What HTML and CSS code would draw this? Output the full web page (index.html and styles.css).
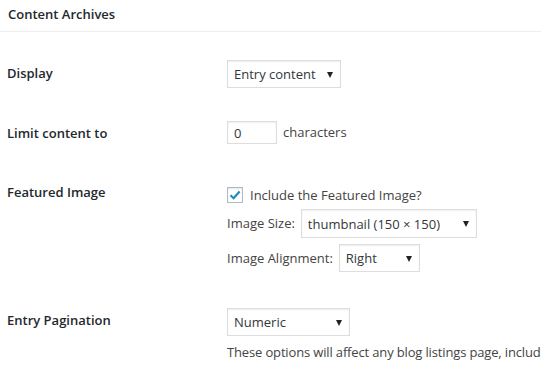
FILE: index.html
```html
<!DOCTYPE html>
<html lang="en">
<head>
  <title>Content Archives</title>
  <meta charset="utf-8">
  <meta name="viewport" content="width=device-width, initial-scale=1">
  <link rel="stylesheet" href="styles.css">
</head>
<body>
  <div class="box">
    <h3 class="box-title">Content Archives</h3>

    <div class="row row-display">
      <span class="row-label">Display</span>
      <div class="row-field">
        <label class="select select-display">
          <select>
            <option>Entry content</option>
            <option>Entry excerpts</option>
          </select>
        </label>
      </div>
    </div>

    <div class="row row-limit">
      <span class="row-label">Limit content to</span>
      <div class="row-field inline">
        <input class="input input-limit" type="text" value="0">
        <span>characters</span>
      </div>
    </div>

    <div class="row row-featured">
      <span class="row-label">Featured Image</span>
      <div class="row-field">
        <label class="checkbox-container">
          <input class="checkbox" type="checkbox" checked>
          <span class="checkbox-box">
            <svg width="12" height="10" viewBox="0 0 12 10"><path d="M1.5 5.2 L4.6 8.2 L10.6 1.4" fill="none" stroke="#1e8cbe" stroke-width="2.2"/></svg>
          </span>
          <span>Include the Featured Image?</span>
        </label>
        <div class="inline line-size">
          <span>Image Size:</span>
          <label class="select select-size">
            <select>
              <option>thumbnail (150 × 150)</option>
              <option>medium (300 × 300)</option>
            </select>
          </label>
        </div>
        <div class="inline line-align">
          <span>Image Alignment:</span>
          <label class="select select-align">
            <select>
              <option>Right</option>
              <option>Left</option>
              <option>None</option>
            </select>
          </label>
        </div>
      </div>
    </div>

    <div class="row row-pagination">
      <span class="row-label">Entry Pagination</span>
      <div class="row-field">
        <label class="select select-pagination">
          <select>
            <option>Numeric</option>
            <option>Previous / Next</option>
          </select>
        </label>
        <p class="description">These options will affect any blog listings page, including archive, author, blog, category, search, and tag pages.</p>
      </div>
    </div>
  </div>
</body>
</html>
```

FILE: styles.css
```css
*, *::before, *::after {
  margin: 0;
  box-sizing: border-box;
}

body {
  background-color: #ffffff;
  color: #444444;
  font-family: "Open Sans", sans-serif;
  font-size: 13px;
  line-height: 17px;
  overflow: hidden;
}

.box-title {
  height: 32px;
  padding: 0 8px;
  border-bottom: 1px solid #eeeeee;
  color: #23282d;
  font-size: 13px;
  font-weight: 600;
  line-height: 29px;
}

.row {
  display: grid;
  grid-template-columns: 220px 1fr;
  padding-left: 7px;
  white-space: nowrap;
}

.row-label {
  color: #23282d;
  font-weight: 600;
  line-height: 18px;
}

.row-display {
  margin-top: 28px;
}

.row-display .row-label {
  padding-top: 4px;
}

.row-limit {
  margin-top: 33px;
}

.row-limit .row-label {
  padding-top: 3px;
}

.row-featured {
  margin-top: 39px;
}

.row-featured .row-field {
  padding-top: 4px;
}

.row-pagination {
  margin-top: 36px;
}

.row-pagination .row-label {
  padding-top: 3px;
}

.inline {
  display: flex;
  align-items: center;
  gap: 6px;
}

.line-size {
  margin-top: 6px;
}

.line-align {
  margin-top: 6px;
}

.input {
  height: 23px;
  border: 1px solid #dddddd;
  padding: 0 6px;
  box-shadow: inset 0 1px 2px rgba(0, 0, 0, 0.07);
  background-color: #ffffff;
  color: #32373c;
  font-family: inherit;
  font-size: 13px;
  outline: none;
}

.input-limit {
  width: 50px;
}

.select {
  position: relative;
  display: block;
  height: 28px;
}

.select select {
  appearance: none;
  width: 100%;
  height: 100%;
  border: 1px solid #dddddd;
  border-radius: 0;
  padding: 0 20px 0 6px;
  box-shadow: inset 0 1px 2px rgba(0, 0, 0, 0.07);
  background-color: #ffffff;
  color: #32373c;
  font-family: inherit;
  font-size: 13px;
  outline: none;
}

.select::after {
  content: '';
  position: absolute;
  right: 8px;
  top: 12px;
  border-top: 6px solid #222222;
  border-left: 3px solid transparent;
  border-right: 3px solid transparent;
  pointer-events: none;
}

.select-display {
  width: 114px;
}

.select-size {
  width: 176px;
  height: 29px;
}

.select-align {
  width: 81px;
}

.select-pagination {
  width: 123px;
}

.checkbox-container {
  display: flex;
  align-items: center;
  gap: 7px;
  height: 16px;
  cursor: pointer;
}

.checkbox {
  display: none;
}

.checkbox-box {
  display: flex;
  align-items: center;
  justify-content: center;
  width: 16px;
  height: 16px;
  border: 1px solid #b4b9be;
  box-shadow: inset 0 1px 2px rgba(0, 0, 0, 0.1);
  background-color: #ffffff;
}

.description {
  margin-top: 8px;
  color: #444444;
  letter-spacing: -0.15px;
}
```
